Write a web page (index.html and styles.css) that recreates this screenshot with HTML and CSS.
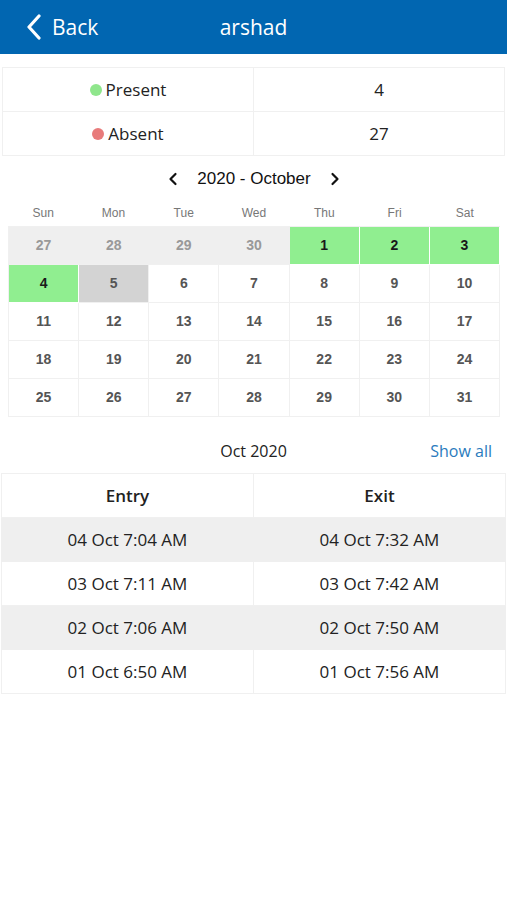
FILE: index.html
```html
<!DOCTYPE html>
<html>
	<head>
		<meta charset="utf-8">
		<title>arshad</title>
		<link rel="stylesheet" href="styles.css">
	</head>
	<body>
		<div class="nav-bar">
			<a class="nav-back" href="#">
				<svg class="nav-back-icon" width="16" height="26" viewBox="0 0 16 26"><path d="M13 2 L3 13 L13 24" fill="none" stroke="#fff" stroke-width="3.2" stroke-linecap="round" stroke-linejoin="round"/></svg>
				<span>Back</span>
			</a>
			<div class="nav-title">arshad</div>
		</div>

		<table class="summary-table">
			<tr>
				<td><span class="dot dot-present"></span>Present</td>
				<td>4</td>
			</tr>
			<tr>
				<td><span class="dot dot-absent"></span>Absent</td>
				<td>27</td>
			</tr>
		</table>

		<div class="cal">
			<div class="cal-head">
				<svg class="cal-arrow" width="12" height="16" viewBox="0 0 12 16"><path d="M8.5 3 L3.5 8 L8.5 13" fill="none" stroke="#111" stroke-width="2.2" stroke-linecap="round" stroke-linejoin="round"/></svg>
				<span class="cal-month">2020 - October</span>
				<svg class="cal-arrow" width="12" height="16" viewBox="0 0 12 16"><path d="M3.5 3 L8.5 8 L3.5 13" fill="none" stroke="#111" stroke-width="2.2" stroke-linecap="round" stroke-linejoin="round"/></svg>
			</div>
			<div class="cal-week">
				<span>Sun</span><span>Mon</span><span>Tue</span><span>Wed</span><span>Thu</span><span>Fri</span><span>Sat</span>
			</div>
			<div class="cal-grid">
				<div class="day other">27</div>
				<div class="day other">28</div>
				<div class="day other">29</div>
				<div class="day other">30</div>
				<div class="day present">1</div>
				<div class="day present">2</div>
				<div class="day present">3</div>
				<div class="day present">4</div>
				<div class="day today">5</div>
				<div class="day">6</div>
				<div class="day">7</div>
				<div class="day">8</div>
				<div class="day">9</div>
				<div class="day">10</div>
				<div class="day">11</div>
				<div class="day">12</div>
				<div class="day">13</div>
				<div class="day">14</div>
				<div class="day">15</div>
				<div class="day">16</div>
				<div class="day">17</div>
				<div class="day">18</div>
				<div class="day">19</div>
				<div class="day">20</div>
				<div class="day">21</div>
				<div class="day">22</div>
				<div class="day">23</div>
				<div class="day">24</div>
				<div class="day">25</div>
				<div class="day">26</div>
				<div class="day">27</div>
				<div class="day">28</div>
				<div class="day">29</div>
				<div class="day">30</div>
				<div class="day">31</div>
			</div>
		</div>

		<div class="log-head">
			<span class="log-month">Oct 2020</span>
			<a class="log-all" href="#">Show all</a>
		</div>

		<table class="log-table">
			<tr class="log-title">
				<td>Entry</td>
				<td>Exit</td>
			</tr>
			<tr class="odd">
				<td>04 Oct 7:04 AM</td>
				<td>04 Oct 7:32 AM</td>
			</tr>
			<tr>
				<td>03 Oct 7:11 AM</td>
				<td>03 Oct 7:42 AM</td>
			</tr>
			<tr class="odd">
				<td>02 Oct 7:06 AM</td>
				<td>02 Oct 7:50 AM</td>
			</tr>
			<tr>
				<td>01 Oct 6:50 AM</td>
				<td>01 Oct 7:56 AM</td>
			</tr>
		</table>
	</body>
</html>
```

FILE: styles.css
```css
body{
	margin: 0;
	background: #ffffff;
	font-family: "Open Sans", "Noto Sans", sans-serif;
	color: #222222;
}
a{
	text-decoration: none;
}

/* top bar */
.nav-bar{
	position: relative;
	height: 54px;
	background: #0166b1;
	display: flex;
	align-items: center;
	justify-content: center;
}
.nav-back{
	position: absolute;
	left: 26px;
	top: 0;
	height: 54px;
	display: flex;
	align-items: center;
	gap: 10px;
	color: #ffffff;
	font-size: 21px;
}
.nav-back-icon{
	display: block;
}
.nav-title{
	color: #ffffff;
	font-size: 21px;
}

/* present / absent */
.summary-table{
	width: 503px;
	margin: 13px 2px 0;
	border-collapse: collapse;
	font-size: 17px;
	color: #222222;
}
.summary-table td{
	width: 50%;
	height: 43px;
	padding: 0;
	text-align: center;
	border: 1px solid #f0f0f0;
}
.dot{
	display: inline-block;
	width: 12px;
	height: 12px;
	border-radius: 50%;
	margin-right: 4px;
	vertical-align: 0;
}
.dot-present{background: #8fe68c;}
.dot-absent{background: #e87b7b;}

/* calendar */
.cal{
	margin: 0 7px 0 8px;
	font-family: "Liberation Sans", Arial, sans-serif;
}
.cal-head{
	display: flex;
	justify-content: center;
	align-items: center;
	gap: 18px;
	height: 45px;
}
.cal-arrow{
	display: block;
}
.cal-month{
	font-size: 17px;
	color: #111111;
}
.cal-week{
	display: grid;
	grid-template-columns: repeat(7, 1fr);
	height: 25px;
	font-size: 12px;
	color: #777777;
	text-align: center;
	line-height: 24px;
}
.cal-grid{
	display: grid;
	grid-template-columns: repeat(7, 1fr);
	border-top: 1px solid #f0f0f0;
	border-left: 1px solid #f0f0f0;
}
.day{
	height: 37px;
	line-height: 37px;
	text-align: center;
	font-size: 14px;
	font-weight: bold;
	color: #555555;
	border-right: 1px solid #f0f0f0;
	border-bottom: 1px solid #f0f0f0;
}
.day.other{
	background: #efefef;
	color: #999999;
	border-right-color: #efefef;
}
.day.present{
	background: #90ee90;
	color: #1a1a1a;
	border-color: #ffffff;
}
.day.today{
	background: #d3d3d3;
	color: #555555;
}

/* entry / exit log */
.log-head{
	position: relative;
	box-sizing: border-box;
	height: 56px;
	padding-top: 12px;
	display: flex;
	align-items: center;
	justify-content: center;
	font-size: 16px;
}
.log-month{
	color: #222222;
}
.log-all{
	position: absolute;
	right: 15px;
	top: 12px;
	line-height: 44px;
	color: #2a7bbd;
	font-size: 16px;
}
.log-table{
	width: 505px;
	margin: 0 1px;
	border-collapse: collapse;
	font-size: 17px;
}
.log-table td{
	width: 50%;
	height: 43px;
	padding: 0;
	text-align: center;
	border: 1px solid #f0f0f0;
}
.log-title td{
	font-weight: 600;
}
.log-table .odd td{
	background: #efefef;
	border-color: #efefef;
}
```
